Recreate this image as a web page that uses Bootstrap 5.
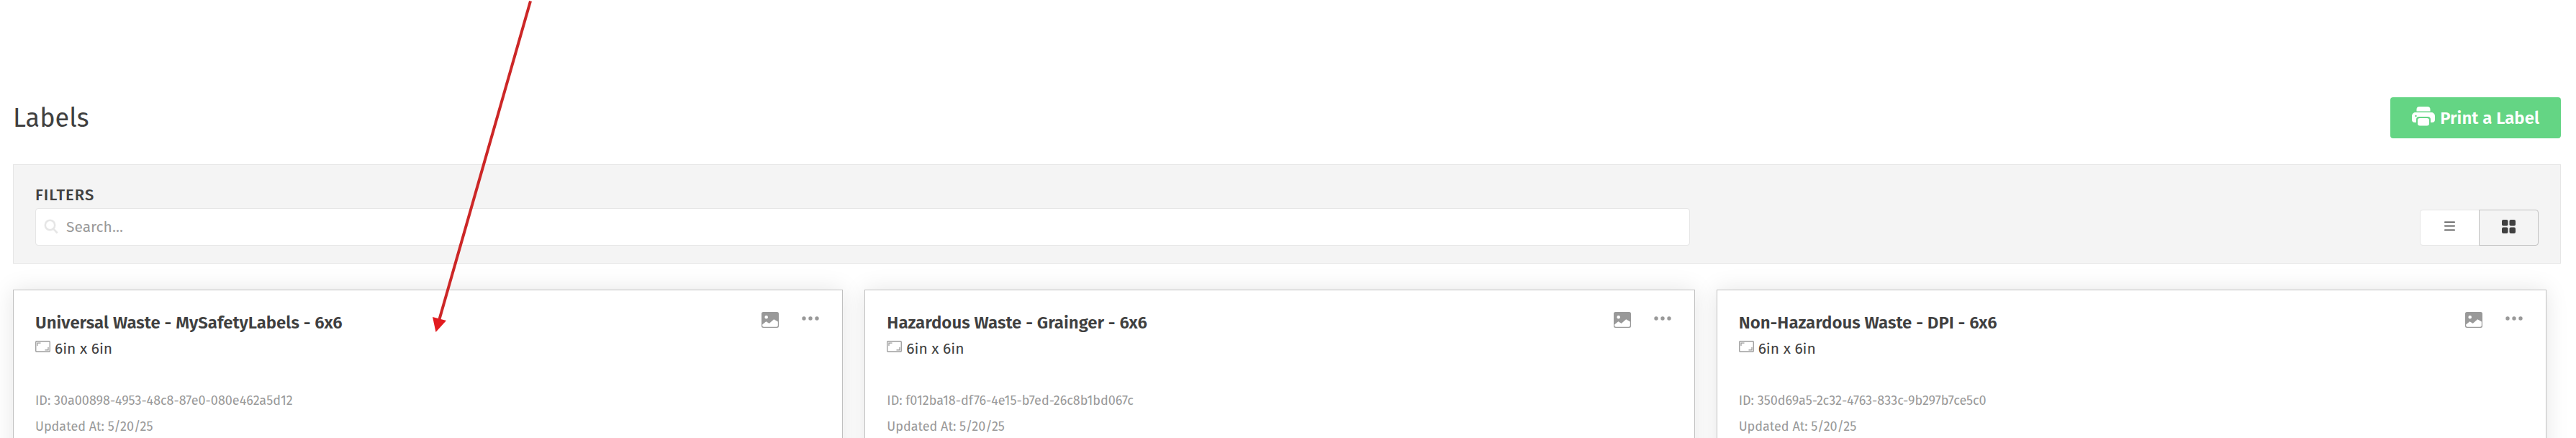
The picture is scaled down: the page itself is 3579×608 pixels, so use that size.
<!DOCTYPE html>
<html lang="en">
<head>
<meta charset="utf-8">
<meta name="viewport" content="width=device-width, initial-scale=1">
<title>Labels</title>
<link rel="stylesheet" href="https://cdn.jsdelivr.net/npm/bootstrap@5.3.0/dist/css/bootstrap.min.css">
<style>
  body { font-family: "Fira Sans", "Noto Sans", sans-serif; color: #404040; background: #fff; }
  .page { padding: 135px 21px 0 18px; }
  .page-head { margin-bottom: 36px; }
  .page-title { font-size: 36px; line-height: 42px; font-weight: 400; }
  .btn-print { --bs-btn-color: #fff; --bs-btn-bg: #64d584; --bs-btn-hover-color: #fff; --bs-btn-hover-bg: #4fc872;
    height: 57px; padding: 0 30px; border: 0; border-radius: 4px; font-size: 24px; line-height: 30px; font-weight: 600; gap: 7px; }

  .filters { padding: 30px 30px 24px; background: #f4f4f4; border: 1px solid #e6e6e6; margin-bottom: 36px; }
  .filters .row { --bs-gutter-x: 60px; }
  .filters-label { font-size: 22px; line-height: 24px; font-weight: 500; letter-spacing: 1px; margin-bottom: 6px; }
  .search-icon { left: 12px; top: 15px; color: #e6e6e6; }
  .search-input { height: 52px; padding: 0 12px 0 42px; border: 1px solid #e6e6e6; border-radius: 4px; font-size: 21px; color: #404040; }
  .search-input::placeholder { color: #999; }
  .view-toggle .btn { width: 83px; height: 50px; padding: 0; border: 1px solid #e6e6e6; border-radius: 4px; background: #fff; color: #404040; }
  .view-toggle .btn.active { background: #f4f4f4; border-color: #c0c0c0; color: #404040; }

  .label-grid { display: grid; grid-template-columns: repeat(3, 1fr); gap: 30px; padding-right: 20px; }
  .label-card { background: #fff; border: 1px solid #c0c0c0; border-radius: 0; padding: 30px 30px 48px; box-shadow: 0 0 30px rgba(0, 0, 0, .1); }
  .label-title { font-size: 24px; line-height: 30px; font-weight: 600; }
  .label-size { font-size: 21px; line-height: 30px; margin-top: 6px; gap: 6px; }
  .label-size svg { margin-top: 4px; color: #999; }
  .label-meta { font-size: 18px; line-height: 36px; color: #999; margin-top: 39px; }
  .card-actions { gap: 32px; color: #999; }
  .card-actions .btn { padding: 0; border: 0; color: #999; line-height: 1; }
  .pointer { left: 590px; top: 0; }
</style>
</head>
<body>
<svg class="d-none" aria-hidden="true">
  <symbol id="i-size" viewBox="0 0 21 16"><rect x=".75" y=".75" width="19.5" height="14.5" rx="1" fill="none" stroke="currentColor" stroke-width="1.3"/><path d="M3 7V3.2h4.5M18 9v3.8h-4.500" fill="none" stroke="currentColor" stroke-width="1.2"/></symbol>
  <symbol id="i-image" viewBox="0 0 24 22"><path fill="currentColor" fill-rule="evenodd" d="M2.500 0h19A2.500 2.500 0 0 1 24 2.500v17a2.500 2.500 0 0 1-2.500 2.500h-19A2.500 2.500 0 0 1 0 19.500v-17A2.500 2.500 0 0 1 2.500 0ZM6.700 5a2.300 2.300 0 1 0 0 4.600 2.300 2.300 0 0 0 0-4.600ZM1.200 17.500v1.300c0 1.200.8 2 2 2h17.600c1.200 0 2-.8 2-2v-5.200L17.200 10.200 10.700 16 6.400 13.200Z"/></symbol>
  <symbol id="i-dots" viewBox="0 0 24 6"><g fill="currentColor"><circle cx="3" cy="3" r="2.700"/><circle cx="12" cy="3" r="2.700"/><circle cx="21" cy="3" r="2.700"/></g></symbol>
</svg>

<div class="vh-100 overflow-hidden position-relative">
  <main class="page">
    <header class="page-head d-flex justify-content-between align-items-center">
      <h1 class="page-title mb-0">Labels</h1>
      <button type="button" class="btn btn-print d-flex align-items-center">
        <svg class="mb-1" width="32" height="27" viewBox="0 0 32 27" aria-hidden="true"><path fill="#fff" d="M6.500 6.500V4a4 4 0 0 1 4-4h11a4 4 0 0 1 4 4v2.500Z"/><path fill="#fff" fill-rule="evenodd" d="M5 8h22a5 5 0 0 1 5 5v5a4 4 0 0 1-4 4h-2v-4a4 4 0 0 0-4-4H10a4 4 0 0 0-4 4v4H4a4 4 0 0 1-4-4v-5a5 5 0 0 1 5-5Zm.5 3.800a1.200 1.200 0 1 0 0 2.400 1.200 1.200 0 0 0 0-2.400Z"/><rect x="8" y="16" width="16" height="10.500" rx="3" fill="#fff"/></svg>
        <span>Print a Label</span>
      </button>
    </header>

    <section class="filters">
      <div class="row align-items-end">
        <div class="col-8">
          <label class="filters-label d-block" for="search">FILTERS</label>
          <div class="position-relative">
            <svg class="search-icon position-absolute" width="20" height="21" viewBox="0 0 20 21" fill="none" stroke="currentColor" stroke-width="2.600" aria-hidden="true"><circle cx="8.500" cy="8.500" r="6.700"/><path d="m13.200 13.700 5.500 5.800"/></svg>
            <input id="search" type="text" class="form-control search-input" placeholder="Search...">
          </div>
        </div>
        <div class="col-4 d-flex justify-content-end">
          <div class="btn-group view-toggle" role="group" aria-label="View">
            <button type="button" class="btn d-flex align-items-center justify-content-center" aria-label="List view">
              <svg class="mb-1" width="15" height="14" viewBox="0 0 15 14" stroke="currentColor" stroke-width="1.400" stroke-linecap="round" aria-hidden="true"><path d="M.7 1.200h13.600M.7 6.700h13.600M.7 12.200h13.600"/></svg>
            </button>
            <button type="button" class="btn active d-flex align-items-center justify-content-center" aria-label="Grid view" aria-pressed="true">
              <svg class="mb-1" width="19" height="19" viewBox="0 0 19 19" fill="currentColor" aria-hidden="true"><rect width="8.500" height="8.500" rx="2"/><rect x="10.500" width="8.500" height="8.500" rx="2"/><rect y="10.500" width="8.500" height="8.500" rx="2"/><rect x="10.500" y="10.500" width="8.500" height="8.500" rx="2"/></svg>
            </button>
          </div>
        </div>
      </div>
    </section>

    <section class="label-grid">
      <article class="label-card">
        <div class="d-flex justify-content-between align-items-start">
          <h2 class="label-title mb-0">Universal Waste - MySafetyLabels - 6x6</h2>
          <div class="card-actions d-flex align-items-start">
            <button type="button" class="btn d-flex" aria-label="Preview"><svg width="24" height="22"><use href="#i-image"/></svg></button>
            <button type="button" class="btn d-flex" aria-label="More"><svg width="26" height="17" viewBox="0 0 26 17"><use href="#i-dots" y="6" width="24" height="6"/></svg></button>
          </div>
        </div>
        <div class="label-size d-flex align-items-start"><svg width="21" height="16"><use href="#i-size"/></svg><span>6in x 6in</span></div>
        <div class="label-meta"><div>ID: 30a00898-4953-48c8-87e0-080e462a5d12</div><div>Updated At: 5/20/25</div></div>
      </article>
      <article class="label-card">
        <div class="d-flex justify-content-between align-items-start">
          <h2 class="label-title mb-0">Hazardous Waste - Grainger - 6x6</h2>
          <div class="card-actions d-flex align-items-start">
            <button type="button" class="btn d-flex" aria-label="Preview"><svg width="24" height="22"><use href="#i-image"/></svg></button>
            <button type="button" class="btn d-flex" aria-label="More"><svg width="26" height="17" viewBox="0 0 26 17"><use href="#i-dots" y="6" width="24" height="6"/></svg></button>
          </div>
        </div>
        <div class="label-size d-flex align-items-start"><svg width="21" height="16"><use href="#i-size"/></svg><span>6in x 6in</span></div>
        <div class="label-meta"><div>ID: f012ba18-df76-4e15-b7ed-26c8b1bd067c</div><div>Updated At: 5/20/25</div></div>
      </article>
      <article class="label-card">
        <div class="d-flex justify-content-between align-items-start">
          <h2 class="label-title mb-0">Non-Hazardous Waste - DPI - 6x6</h2>
          <div class="card-actions d-flex align-items-start">
            <button type="button" class="btn d-flex" aria-label="Preview"><svg width="24" height="22"><use href="#i-image"/></svg></button>
            <button type="button" class="btn d-flex" aria-label="More"><svg width="26" height="17" viewBox="0 0 26 17"><use href="#i-dots" y="6" width="24" height="6"/></svg></button>
          </div>
        </div>
        <div class="label-size d-flex align-items-start"><svg width="21" height="16"><use href="#i-size"/></svg><span>6in x 6in</span></div>
        <div class="label-meta"><div>ID: 350d69a5-2c32-4763-833c-9b297b7ce5c0</div><div>Updated At: 5/20/25</div></div>
      </article>
    </section>
  </main>

  <!-- Annotation arrow over the first card -->
  <svg class="pointer position-absolute pe-none" width="160" height="470" viewBox="0 0 160 470" aria-hidden="true">
    <path d="M147 1.500 20.500 443" stroke="#cc2727" stroke-width="4" fill="none"/>
    <path d="M11 440l19 5-14.500 16Z" fill="#e21b1f"/>
  </svg>
</div>
<script src="https://cdn.jsdelivr.net/npm/bootstrap@5.3.0/dist/js/bootstrap.bundle.min.js"></script>
</body>
</html>
